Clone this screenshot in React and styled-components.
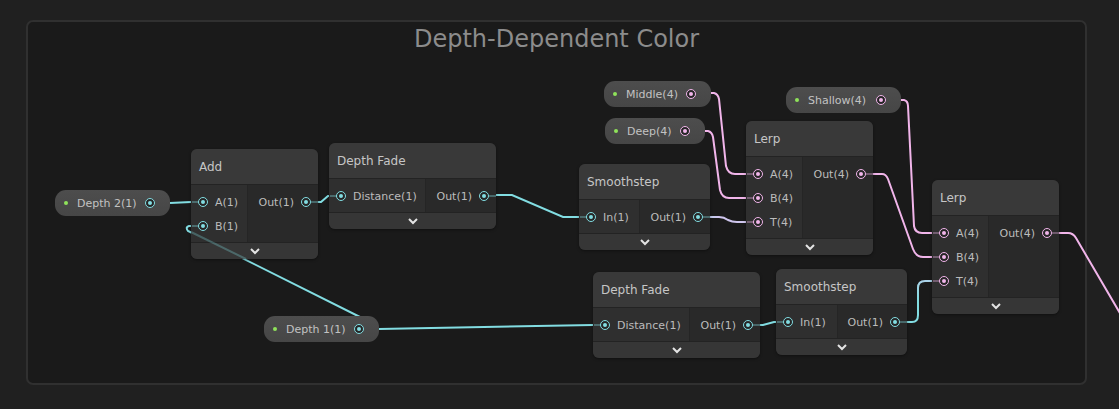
import styled, { createGlobalStyle } from 'styled-components';

const CYAN = '#82dde2';
const PINK = '#f1b5ea';

// group box origin on the page (left/top edge + border)
const OX = 28;
const OY = 22;

const GlobalStyle = createGlobalStyle`
    body {
        margin: 0;
        background: #202020;
        font-family: "DejaVu Sans", Verdana, sans-serif;
    }
`;

const Page = styled.div`
    width: 1119px;
    height: 409px;
    padding: 20px 32px 0 26px;
    box-sizing: border-box;
    overflow: hidden;
`;

const Group = styled.div`
    position: relative;
    width: 1061px;
    height: 365px;
    box-sizing: border-box;
    background: #1a1a1a;
    border: 2px solid #303030;
    border-radius: 7px;
`;

const GroupTitle = styled.div`
    padding-top: 3px;
    text-align: center;
    font-size: 24px;
    line-height: 28px;
    color: #8c8c8c;
`;

const Wires = styled.svg`
    position: absolute;
    left: 0;
    top: 0;
    width: 100%;
    height: 100%;
    overflow: visible;
    pointer-events: none;
    z-index: ${p => p.$over ? 3 : 0};
`;

const NodeBox = styled.div`
    position: absolute;
    left: ${p => p.$x - OX}px;
    top: ${p => p.$y - OY}px;
    width: ${p => p.$w}px;
    border-radius: 6px;
    overflow: hidden;
    background: #292929;
    z-index: 1;
    box-shadow: 0 1px 3px rgba(0, 0, 0, 0.4);
`;

const NodeHeader = styled.div`
    height: 35px;
    display: flex;
    align-items: center;
    padding-left: 8px;
    background: #393939;
    border-bottom: 1px solid #232323;
    font-size: 12px;
    color: #c6c6c6;
`;

const NodeBody = styled.div`
    display: flex;
    border-bottom: 1px solid #232323;
`;

const InputCol = styled.div`
    width: ${p => p.$w}px;
    box-sizing: border-box;
    padding: 5px 0 4px;
    background: #2f2f2f;
    border-right: 1px solid #252525;
`;

const OutputCol = styled.div`
    flex: 1;
    padding: 5px 0 4px;
    background: #292929;
`;

const PortRow = styled.div`
    height: 24px;
    display: flex;
    align-items: center;
    justify-content: ${p => p.$out ? 'flex-end' : 'flex-start'};
    padding: ${p => p.$out ? '0 7px 0 0' : '0 0 0 7px'};
    gap: 7px;
    font-size: 11px;
    color: #bcbcbc;
    white-space: nowrap;
`;

const Port = styled.span`
    position: relative;
    flex: none;
    width: 10px;
    height: 10px;
    box-sizing: border-box;
    border-radius: 50%;
    border: 1.5px solid ${p => p.$color};
    background: #262626;

    &::after {
        content: '';
        position: absolute;
        left: 1.5px;
        top: 1.5px;
        width: 4px;
        height: 4px;
        border-radius: 50%;
        background: ${p => p.$color};
    }

    &::before {
        content: ${p => p.$stub ? "''" : 'none'};
        position: absolute;
        top: 2.5px;
        ${p => p.$stub === 'left' ? 'right: 8.5px;' : 'left: 8.5px;'}
        width: 7px;
        height: 2px;
        background: ${p => p.$color};
        opacity: 0.35;
    }
`;

const Expander = styled.div`
    height: 16px;
    display: flex;
    align-items: center;
    justify-content: center;
    background: #363636;
`;

const Pill = styled.div`
    position: absolute;
    left: ${p => p.$x - OX}px;
    top: ${p => p.$y - OY}px;
    width: ${p => p.$w}px;
    height: 26px;
    box-sizing: border-box;
    display: flex;
    align-items: center;
    padding: 0 15px 0 9px;
    border-radius: 11px;
    background: linear-gradient(#4d4d4d, #464646);
    font-size: 11px;
    color: #c2c2c2;
    z-index: 1;
`;

const Dot = styled.span`
    width: 4px;
    height: 4px;
    border-radius: 50%;
    background: #8fe35a;
    margin-right: 9px;
`;

const PillLabel = styled.span`
    flex: 1;
    white-space: nowrap;
`;

function Chevron() {
    return (
        <svg width="12" height="8" viewBox="0 0 12 8">
            <path d="M2 2 L6 6 L10 2" fill="none" stroke="#e4e4e4" strokeWidth="2" />
        </svg>
    );
}

function Node({ x, y, w, inW, title, inputs, output, color }) {
    return (
        <NodeBox $x={x} $y={y} $w={w}>
            <NodeHeader>{title}</NodeHeader>
            <NodeBody>
                <InputCol $w={inW}>
                    {inputs.map(name => (
                        <PortRow key={name}>
                            <Port $color={color} $stub="left" />
                            {name}
                        </PortRow>
                    ))}
                </InputCol>
                <OutputCol>
                    <PortRow $out>
                        {output}
                        <Port $color={color} $stub="right" />
                    </PortRow>
                </OutputCol>
            </NodeBody>
            <Expander><Chevron /></Expander>
        </NodeBox>
    );
}

function Property({ x, y, w, label, color }) {
    return (
        <Pill $x={x} $y={y} $w={w}>
            <Dot />
            <PillLabel>{label}</PillLabel>
            <Port $color={color} />
        </Pill>
    );
}

const nodes = [
    { x: 191, y: 149, w: 127, inW: 57, title: 'Add', inputs: ['A(1)', 'B(1)'], output: 'Out(1)', color: CYAN },
    { x: 329, y: 143, w: 167, inW: 97, title: 'Depth Fade', inputs: ['Distance(1)'], output: 'Out(1)', color: CYAN },
    { x: 579, y: 164, w: 131, inW: 61, title: 'Smoothstep', inputs: ['In(1)'], output: 'Out(1)', color: CYAN },
    { x: 746, y: 121, w: 127, inW: 57, title: 'Lerp', inputs: ['A(4)', 'B(4)', 'T(4)'], output: 'Out(4)', color: PINK },
    { x: 932, y: 180, w: 127, inW: 57, title: 'Lerp', inputs: ['A(4)', 'B(4)', 'T(4)'], output: 'Out(4)', color: PINK },
    { x: 593, y: 272, w: 167, inW: 97, title: 'Depth Fade', inputs: ['Distance(1)'], output: 'Out(1)', color: CYAN },
    { x: 776, y: 269, w: 131, inW: 62, title: 'Smoothstep', inputs: ['In(1)'], output: 'Out(1)', color: CYAN },
];

const properties = [
    { x: 55, y: 190, w: 115, label: 'Depth 2(1)', color: CYAN },
    { x: 264, y: 316, w: 115, label: 'Depth 1(1)', color: CYAN },
    { x: 604, y: 81, w: 107, label: 'Middle(4)', color: PINK },
    { x: 605, y: 118, w: 100, label: 'Deep(4)', color: PINK },
    { x: 786, y: 87, w: 115, label: 'Shallow(4)', color: PINK },
];

// edges in page coordinates
const edges = [
    { d: 'M170,203 L191,202', stroke: CYAN },
    { d: 'M318,202 L321,202 L328,196 L330,196', stroke: CYAN },
    { d: 'M496,195 L512,195 L563,217 L579,217', stroke: CYAN },
    { d: 'M710,217 L719,217 Q724,217 728,220 Q732,222 737,222 L746,222', stroke: 'url(#mixA)' },
    { d: 'M191,226 L189,226 Q185,227 188,231 L372,323', stroke: CYAN },
    { d: 'M379,329 L593,325', stroke: CYAN },
    { d: 'M760,325 L763,325 L774,322 L776,322', stroke: CYAN },
    { d: 'M907,322 L912,322 Q918,322 918,315 L918,288 Q918,281 925,281 L932,281', stroke: 'url(#mixB)' },
    { d: 'M711,93 L714,93 Q718,94 719,99 L726,166 Q728,174 735,174 L746,174', stroke: PINK },
    { d: 'M705,131 L708,131 Q712,132 713,137 L720,190 Q722,198 729,198 L746,198', stroke: PINK },
    { d: 'M873,174 L882,174 Q886,174 888,179 L913,249 Q916,257 923,257 L932,257', stroke: PINK },
    { d: 'M901,100 L904,100 Q908,101 908,106 L914,226 Q915,233 922,233 L932,233', stroke: PINK },
    { d: 'M1059,233 L1068,233 Q1073,233 1076,238 L1121,315', stroke: PINK },
];

export default function App() {
    return (
        <Page>
            <GlobalStyle />
            <Group>
                <GroupTitle>Depth-Dependent Color</GroupTitle>

                <Wires>
                    <defs>
                        <linearGradient id="mixA" gradientUnits="userSpaceOnUse" x1={710 - OX} y1="0" x2={746 - OX} y2="0">
                            <stop offset="0" stopColor={CYAN} />
                            <stop offset="1" stopColor="#cfc6ee" />
                        </linearGradient>
                        <linearGradient id="mixB" gradientUnits="userSpaceOnUse" x1="0" y1={322 - OY} x2="0" y2={281 - OY}>
                            <stop offset="0" stopColor={CYAN} />
                            <stop offset="1" stopColor="#d9c6ef" />
                        </linearGradient>
                    </defs>
                    <g transform={`translate(${-OX},${-OY})`}>
                        {edges.map((e, i) => (
                            <path key={i} d={e.d} fill="none" stroke={e.stroke} strokeWidth="2" />
                        ))}
                    </g>
                </Wires>

                {nodes.map((n, i) => <Node key={i} {...n} />)}
                {properties.map(p => <Property key={p.label} {...p} />)}

                <Wires $over>
                    <g transform={`translate(${-OX},${-OY})`}>
                        <path d="M191,232 L246,259" fill="none" stroke={CYAN} strokeOpacity="0.3" strokeWidth="2" />
                    </g>
                </Wires>
            </Group>
        </Page>
    );
}
